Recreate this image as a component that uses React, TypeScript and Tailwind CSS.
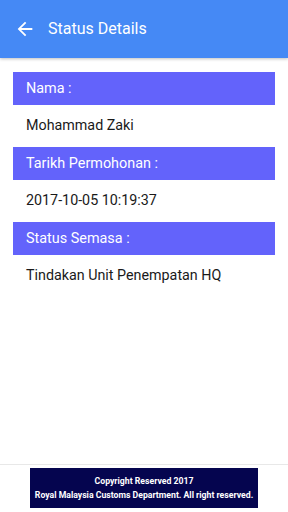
const rows = [
  { label: 'Nama :', value: 'Mohammad Zaki' },
  { label: 'Tarikh Permohonan :', value: '2017-10-05 10:19:37' },
  { label: 'Status Semasa :', value: 'Tindakan Unit Penempatan HQ' },
]

export default function App() {
  return (
    <main className="flex h-screen flex-col bg-white font-['Roboto',sans-serif]">
      <header className="flex h-[58px] shrink-0 items-center bg-[#4589f5] pl-[14px] text-white shadow-[0_1px_3px_rgba(0,0,0,0.25)]">
        <svg viewBox="0 0 24 24" className="h-[22px] w-[22px] fill-current">
          <path d="M20 11H7.83l5.59-5.59L12 4l-8 8 8 8 1.41-1.41L7.83 13H20v-2z" />
        </svg>
        <h1 className="ml-[12px] text-[16px]">Status Details</h1>
      </header>

      <div className="flex-1 px-[13px] pt-[14px]">
        {rows.map((row) => (
          <div key={row.label}>
            <div className="flex h-[33px] items-center bg-[#6363fb] px-[13px] text-[14.4px] text-white">
              {row.label}
            </div>
            <p className="flex h-[42px] items-center px-[13px] text-[14.3px] text-[#1a1a1a]">
              {row.value}
            </p>
          </div>
        ))}
      </div>

      <footer className="shrink-0 border-t border-[#e8e8e8] pb-[4px] pt-[3px]">
        <div className="mx-auto flex h-[40px] w-[228px] flex-col items-center justify-center bg-[#05054f] text-[8.7px] font-bold leading-[14px] text-white">
          <p>Copyright Reserved 2017</p>
          <p>Royal Malaysia Customs Department. All right reserved.</p>
        </div>
      </footer>
    </main>
  )
}
